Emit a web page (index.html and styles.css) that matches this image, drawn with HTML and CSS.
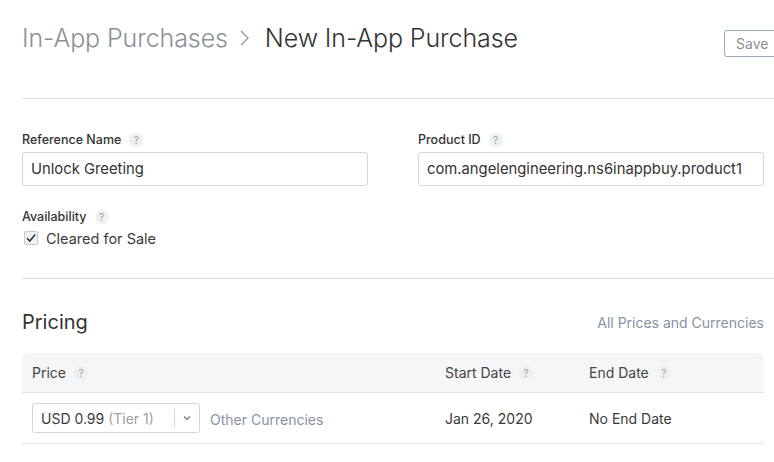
FILE: index.html
```html
<!DOCTYPE html>
<html>
<head>
<meta charset="utf-8">
<link rel="stylesheet" href="styles.css">
</head>
<body>
<div class="page">
  <header class="head">
    <h1 class="crumbs"><span class="crumb-parent">In-App Purchases</span><svg class="chev" width="12" height="20" viewBox="0 0 12 20"><path d="M2 3 L9 10 L2 17" fill="none" stroke="#a3a3a8" stroke-width="1.5"/></svg><span class="crumb-cur">New In-App Purchase</span></h1>
    <button class="save">Save</button>
  </header>
  <hr class="rule rule-top">
  <section class="fields">
    <div class="field">
      <div class="label">Reference Name <span class="help">?</span></div>
      <div class="input">Unlock Greeting</div>
    </div>
    <div class="field">
      <div class="label">Product ID <span class="help">?</span></div>
      <div class="input">com.angelengineering.ns6inappbuy.product1</div>
    </div>
  </section>
  <section class="avail">
    <div class="label">Availability <span class="help">?</span></div>
    <label class="check"><span class="box"><svg width="12" height="12" viewBox="0 0 12 12"><path d="M2 6.2 L4.8 9 L10.2 2.6" fill="none" stroke="#333" stroke-width="1.6"/></svg></span>Cleared for Sale</label>
  </section>
  <hr class="rule rule-mid">
  <section class="pricing">
    <div class="pricing-head">
      <h2 class="pricing-title">Pricing</h2>
      <a class="link">All Prices and Currencies</a>
    </div>
    <div class="table">
      <div class="row thead">
        <div class="c1">Price <span class="help">?</span></div>
        <div class="c2">Start Date <span class="help">?</span></div>
        <div class="c3">End Date <span class="help">?</span></div>
      </div>
      <div class="row tbody">
        <div class="c1">
          <div class="select"><span class="sel-val">USD 0.99 <span class="tier">(Tier 1)</span></span><span class="sel-sep"></span><svg class="sel-arrow" width="8" height="6" viewBox="0 0 8 6"><path d="M1 1.5 L4 4.5 L7 1.5" fill="none" stroke="#777" stroke-width="1.2"/></svg></div>
          <a class="link other">Other Currencies</a>
        </div>
        <div class="c2">Jan 26, 2020</div>
        <div class="c3">No End Date</div>
      </div>
    </div>
  </section>
</div>
</body>
</html>
```
FILE: styles.css
```css
* { box-sizing: border-box; }
html, body { margin: 0; padding: 0; background: #fff; }
body {
  font-family: Inter, "Liberation Sans", sans-serif;
  color: #3a3a3a;
  overflow: hidden;
  width: 774px;
}
.page { padding: 0 0 0 22px; }
.head {
  display: flex;
  align-items: flex-start;
  justify-content: space-between;
  height: 98px;
}
.crumbs {
  margin: 0;
  padding-top: 22px;
  font-size: 25px;
  font-weight: 300;
  letter-spacing: -0.1px;
  display: flex;
  align-items: center;
  line-height: 32px;
}
.crumb-parent { color: #8e9097; }
.crumb-cur { color: #333; }
.chev { margin: 0 14px 0 11px; }
.save {
  margin-top: 30px;
  width: 56px;
  height: 27px;
  margin-right: -6px;
  border: 1px solid #9ba7b8;
  border-radius: 3px;
  background: #fff;
  color: #8f8f94;
  font-family: inherit;
  font-size: 14px;
  text-align: left;
  padding: 0 0 0 11px;
}
.rule { border: 0; border-top: 1px solid #e0e0e0; margin: 0; }
.fields {
  display: grid;
  grid-template-columns: 346px 346px;
  column-gap: 50px;
  padding-top: 32px;
}
.label {
  font-size: 12.5px;
  font-weight: 500;
  color: #333;
  height: 18px;
  line-height: 18px;
  display: flex;
  align-items: center;
}
.help {
  display: inline-flex;
  align-items: center;
  justify-content: center;
  width: 14px;
  height: 14px;
  border-radius: 50%;
  background: #eef0f2;
  color: #9aa0a6;
  font-size: 10px;
  font-weight: 400;
  margin-left: 8px;
}
.input {
  margin-top: 3px;
  height: 34px;
  border: 1px solid #d7d7d7;
  border-radius: 3px;
  padding: 0 8px;
  font-size: 14.8px;
  line-height: 32px;
  color: #333;
  white-space: nowrap;
}
.avail { padding-top: 22px; padding-bottom: 31px; }
.check {
  display: flex;
  align-items: center;
  margin-top: 3px;
  font-size: 14.5px;
  color: #3a3a3a;
  height: 18px;
}
.box {
  width: 14px;
  height: 14px;
  border: 1px solid #c5c8cc;
  border-radius: 2px;
  background: #f0f1f3;
  margin: 0 8px 0 2px;
  display: inline-flex;
  align-items: center;
  justify-content: center;
}
.pricing { width: 742px; }
.pricing-head {
  display: flex;
  justify-content: space-between;
  align-items: center;
  height: 74px;
  padding-top: 12px;
}
.pricing-title { margin: 0; font-size: 20px; font-weight: 400; color: #333; }
.link { color: #8792a6; font-size: 14px; text-decoration: none; }
.row {
  display: grid;
  grid-template-columns: 413px 144px 1fr;
  align-items: center;
  border-bottom: 1px solid #e3e3e3;
  font-size: 14px;
}
.row > div { padding-left: 10px; display: flex; align-items: center; }
.thead {
  height: 40px;
  background: #f5f6f7;
  border-radius: 6px 6px 0 0;
  color: #444;
}
.tbody { height: 51px; color: #3a3a3a; }
.select {
  width: 168px;
  height: 30px;
  border: 1px solid #d5d5d5;
  border-radius: 3px;
  display: flex;
  align-items: center;
  padding-left: 8px;
  font-size: 14px;
}
.sel-val { flex: 1; white-space: nowrap; }
.tier { color: #a0a0a0; }
.sel-sep { width: 1px; height: 18px; background: #d5d5d5; }
.sel-arrow { margin: 0 8px 0 8px; }
.other { margin-left: 10px; margin-top: 2px; }
```
